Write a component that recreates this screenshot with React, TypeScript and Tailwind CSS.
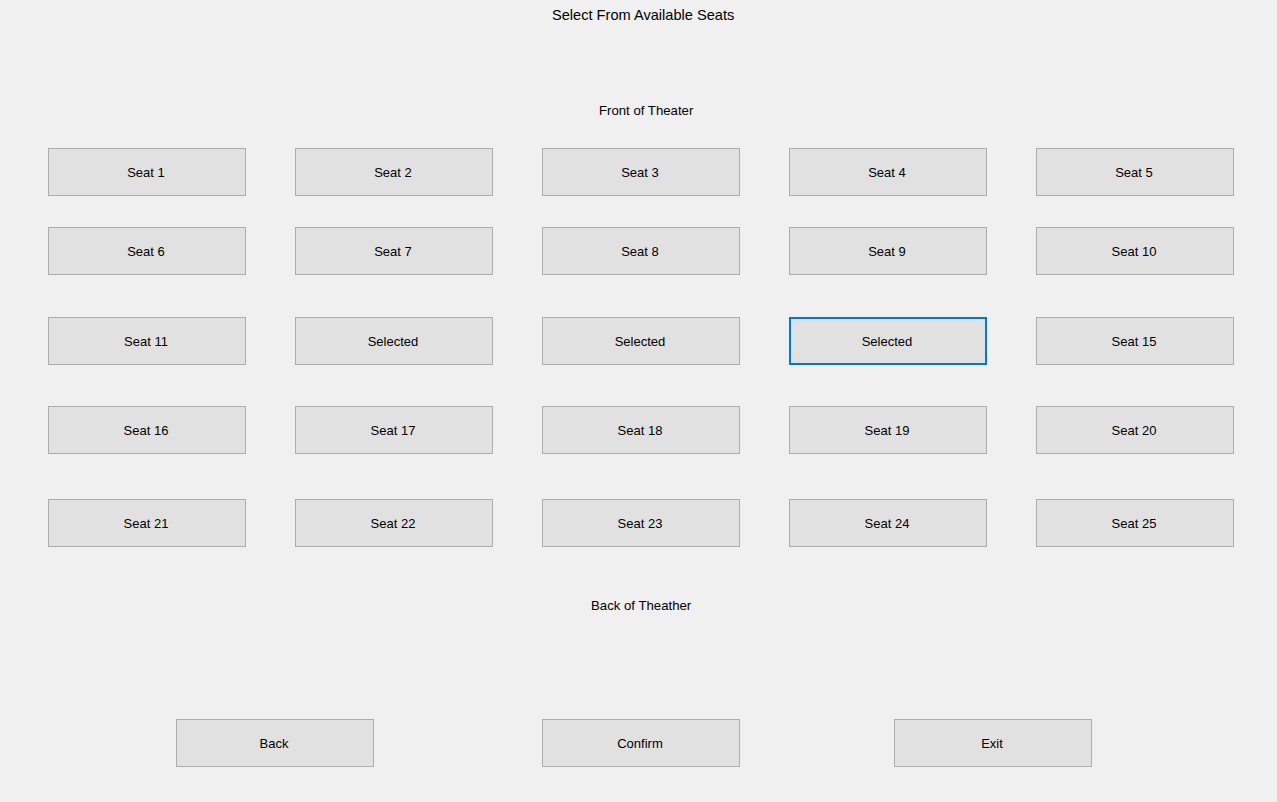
import React from "react";

const rows: { label: string; selected?: boolean; focus?: boolean }[][] = [
  [1, 2, 3, 4, 5].map((n) => ({ label: `Seat ${n}` })),
  [6, 7, 8, 9, 10].map((n) => ({ label: `Seat ${n}` })),
  [
    { label: "Seat 11" },
    { label: "Selected" },
    { label: "Selected" },
    { label: "Selected", focus: true },
    { label: "Seat 15" },
  ],
  [16, 17, 18, 19, 20].map((n) => ({ label: `Seat ${n}` })),
  [21, 22, 23, 24, 25].map((n) => ({ label: `Seat ${n}` })),
];

const rowMargins = ["mt-[28px]", "mt-[31px]", "mt-[42px]", "mt-[41px]", "mt-[45px]"];

function Btn({ label, focus, className = "" }: { label: string; focus?: boolean; className?: string }) {
  return (
    <button
      className={`w-[198px] h-[48px] shrink-0 bg-[#e1e1e1] text-[13px] text-black flex items-center justify-center pt-[2px] pr-[2px] ${
        focus ? "border-2 border-[#0078d7]" : "border border-[#adadad]"
      } ${className}`}
    >
      {label}
    </button>
  );
}

export default function App() {
  return (
    <div
      className="w-[1277px] h-[802px] bg-[#f0f0f0] flex flex-col overflow-hidden text-black"
      style={{ fontFamily: '"Liberation Sans", Arial, sans-serif' }}
    >
      <div className="h-[30px] flex items-center pt-[2px] pl-[552px] text-[14.6px] whitespace-nowrap">
        Select From Available Seats
      </div>
      <div className="mt-[70px] h-[20px] flex items-center pt-[2px] pl-[599px] text-[13.2px] whitespace-nowrap">
        Front of Theater
      </div>
      {rows.map((row, i) => (
        <div key={i} className={`flex pl-[48px] gap-[49px] ${rowMargins[i]}`}>
          {row.map((s, j) => (
            <Btn key={j} label={s.label} focus={s.focus} />
          ))}
        </div>
      ))}
      <div className="mt-[48px] h-[20px] flex items-center pt-[2px] pl-[591px] text-[13.2px] whitespace-nowrap">
        Back of Theather
      </div>
      <div className="mt-[104px] flex pl-[176px]">
        <Btn label="Back" />
        <Btn label="Confirm" className="ml-[168px]" />
        <Btn label="Exit" className="ml-[154px]" />
      </div>
    </div>
  );
}
